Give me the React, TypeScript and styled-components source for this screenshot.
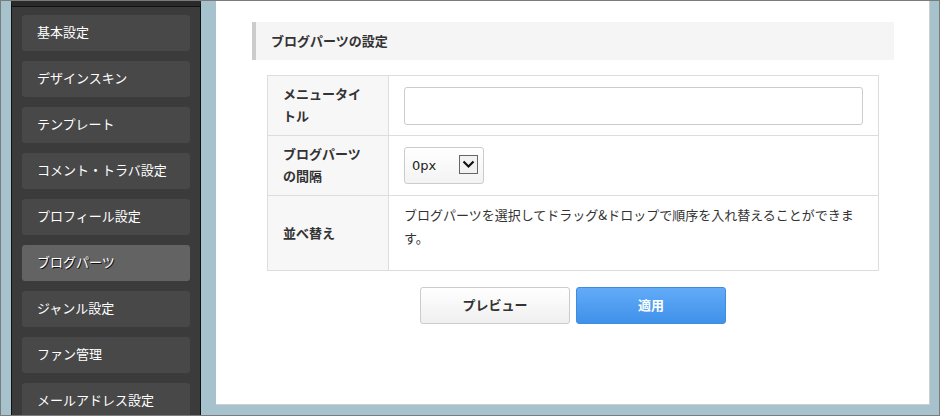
import styled, { createGlobalStyle } from 'styled-components';

const GlobalStyle = createGlobalStyle`
  html, body {
    margin: 0;
    padding: 0;
    background: #ffffff;
  }
  body {
    font-family: "Noto Sans CJK JP", "Noto Sans", sans-serif;
    font-size: 13px;
    color: #333333;
  }
`;

const menuItems = [
  '基本設定',
  'デザインスキン',
  'テンプレート',
  'コメント・トラバ設定',
  'プロフィール設定',
  'ブログパーツ',
  'ジャンル設定',
  'ファン管理',
  'メールアドレス設定',
];

export default function App() {
  return (
    <>
      <GlobalStyle />
      <Frame>
        <Sidebar>
          {menuItems.map((label) => (
            <MenuItem key={label} $active={label === 'ブログパーツ'}>
              {label}
            </MenuItem>
          ))}
        </Sidebar>
        <Panel>
          <SectionTitle>ブログパーツの設定</SectionTitle>
          <SettingsTable>
            <tbody>
              <tr>
                <LabelCell $height={60}>メニュータイトル</LabelCell>
                <ValueCell>
                  <TextInput type="text" />
                </ValueCell>
              </tr>
              <tr>
                <LabelCell $height={60}>ブログパーツの間隔</LabelCell>
                <ValueCell>
                  <SelectWrap>
                    <Select defaultValue="0">
                      <option value="0">0px</option>
                      <option value="5">5px</option>
                      <option value="10">10px</option>
                    </Select>
                    <SelectArrow>
                      <svg width="13" height="9" viewBox="0 0 13 9">
                        <path d="M1.5 1.5 L6.5 6.5 L11.5 1.5" fill="none" stroke="#111" strokeWidth="2.2" />
                      </svg>
                    </SelectArrow>
                  </SelectWrap>
                </ValueCell>
              </tr>
              <tr>
                <LabelCell $height={75}>並べ替え</LabelCell>
                <ValueCell $top>
                  ブログパーツを選択してドラッグ&ドロップで順序を入れ替えることができます。
                </ValueCell>
              </tr>
            </tbody>
          </SettingsTable>
          <ButtonRow>
            <Button>プレビュー</Button>
            <Button $primary>適用</Button>
          </ButtonRow>
        </Panel>
      </Frame>
    </>
  );
}

const Frame = styled.div`
  box-sizing: border-box;
  width: 940px;
  height: 416px;
  border: 1px solid #7b7b7b;
  background: #a6c3cd;
  display: flex;
  align-items: stretch;
  overflow: hidden;
`;

const Sidebar = styled.nav`
  box-sizing: border-box;
  width: 190px;
  margin-left: 10px;
  flex-shrink: 0;
  background: #3b3b3b;
  border-left: 1px solid #121212;
  border-right: 1px solid #121212;
  border-top: 5px solid #2a2a2a;
  box-shadow: inset 0 1px 0 #121212;
  padding: 9px 10px 0;
  display: flex;
  flex-direction: column;
  gap: 10px;
  overflow: hidden;
`;

const MenuItem = styled.div<{ $active?: boolean }>`
  box-sizing: border-box;
  flex-shrink: 0;
  height: 36px;
  border-radius: 3px;
  background: ${(p) => (p.$active ? '#636363' : '#484848')};
  color: #ffffff;
  padding: 0 0 3px 15px;
  display: flex;
  align-items: center;
  font-size: 13px;
  text-shadow: ${(p) => (p.$active ? '1px 1px 0 #111' : 'none')};
`;

const Panel = styled.main`
  box-sizing: border-box;
  flex: 1;
  margin: 0 9px 10px 15px;
  background: #ffffff;
  border-right: 1px solid #cfcfcf;
  border-bottom: 1px solid #cfcfcf;
  padding: 21px 35px 0 36px;
`;

const SectionTitle = styled.h2`
  box-sizing: border-box;
  margin: 0;
  height: 38px;
  background: #f5f5f5;
  border-left: 4px solid #cccccc;
  padding: 0 0 2px 15px;
  display: flex;
  align-items: center;
  font-size: 13px;
  font-weight: bold;
  color: #333333;
`;

const SettingsTable = styled.table`
  box-sizing: border-box;
  width: calc(100% - 30px);
  margin: 15px 15px 0;
  border-collapse: collapse;
  table-layout: fixed;

  td {
    border: 1px solid #dddddd;
  }
`;

const LabelCell = styled.td<{ $height: number }>`
  box-sizing: border-box;
  width: 121px;
  height: ${(p) => p.$height}px;
  padding: 0 15px 1px;
  background: #f7f7f7;
  font-weight: bold;
  line-height: 22px;
  vertical-align: middle;
`;

const ValueCell = styled.td<{ $top?: boolean }>`
  padding: ${(p) => (p.$top ? '7px 15px' : '0 15px')};
  vertical-align: ${(p) => (p.$top ? 'top' : 'middle')};
  line-height: 23px;
`;

const TextInput = styled.input`
  box-sizing: border-box;
  display: block;
  width: 100%;
  height: 38px;
  border: 1px solid #cccccc;
  border-radius: 3px;
  background: #ffffff;
  padding: 0 8px;
  font: inherit;
`;

const SelectWrap = styled.div`
  position: relative;
  width: 80px;
  height: 37px;
`;

const Select = styled.select`
  box-sizing: border-box;
  appearance: none;
  width: 100%;
  height: 100%;
  border: 1px solid #cccccc;
  border-radius: 3px;
  background: linear-gradient(#ffffff, #f3f3f3);
  padding: 0 0 0 7px;
  font-family: "DejaVu Sans", "Noto Sans", sans-serif;
  font-size: 13px;
  color: #222222;
`;

const SelectArrow = styled.span`
  position: absolute;
  right: 6px;
  top: 8px;
  box-sizing: border-box;
  width: 19px;
  height: 19px;
  border: 1px solid #666666;
  background: #f2f2f2;
  display: flex;
  align-items: center;
  justify-content: center;
  pointer-events: none;
`;

const ButtonRow = styled.div`
  display: flex;
  justify-content: center;
  gap: 6px;
  margin-top: 16px;
`;

const Button = styled.button<{ $primary?: boolean }>`
  box-sizing: border-box;
  width: 150px;
  height: 37px;
  padding: 0 0 2px;
  border-radius: 3px;
  border: 1px solid ${(p) => (p.$primary ? '#3f8be0' : '#cccccc')};
  background: ${(p) =>
    p.$primary
      ? 'linear-gradient(#62abf8, #3f91ea)'
      : 'linear-gradient(#ffffff, #efefef)'};
  color: ${(p) => (p.$primary ? '#ffffff' : '#333333')};
  font-family: inherit;
  font-size: 13px;
  font-weight: bold;
  cursor: pointer;
`;
